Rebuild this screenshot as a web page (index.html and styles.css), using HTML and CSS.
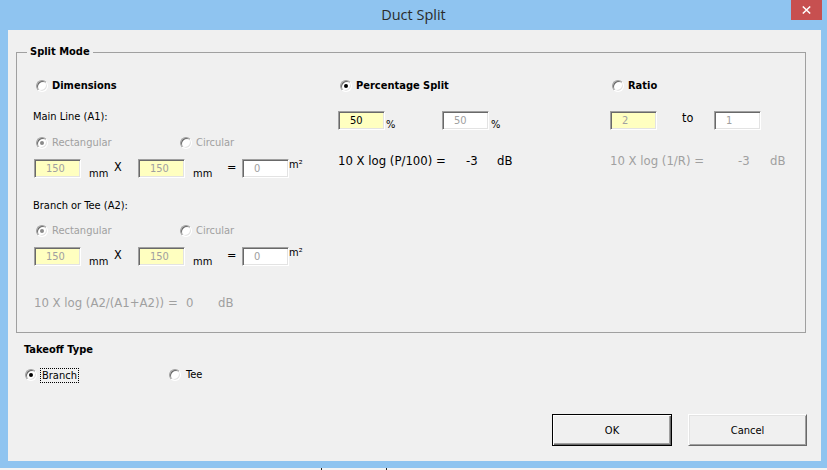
FILE: index.html
```html
<!DOCTYPE html>
<html lang="en">
<head>
<meta charset="utf-8">
<title>Duct Split</title>
<link rel="stylesheet" href="styles.css">
</head>
<body>
<div class="window">
  <header class="titlebar">
    <span></span>
    <h1 class="title">Duct Split</h1>
    <button class="close" aria-label="Close"><svg width="9" height="8" viewBox="0 0 9 8"><path d="M0.8 0.5 L8.2 7.5 M8.2 0.5 L0.8 7.5" stroke="#fff" stroke-width="1.5" fill="none"/></svg></button>
  </header>
  <main class="client">
    <fieldset class="group">
      <legend>Split Mode</legend>
      <div class="cols">
        <section class="col col-dim">
          <div class="opt-row"><span class="radio"></span><span class="bold">Dimensions</span></div>
          <div class="lbl lbl-main">Main Line (A1):</div>
          <div class="shape-row">
            <span class="opt dis"><span class="radio on dis"></span>Rectangular</span>
            <span class="opt dis"><span class="radio dis"></span>Circular</span>
          </div>
          <div class="dim-row">
            <span class="box yellow dis">150</span>
            <span class="mm mm1">mm</span>
            <span class="times">X</span>
            <span class="box yellow dis">150</span>
            <span class="mm mm2">mm</span>
            <span class="eq">=</span>
            <span class="box dis">0</span>
            <span class="sq">m²</span>
          </div>
          <div class="lbl lbl-branch">Branch or Tee (A2):</div>
          <div class="shape-row shape-row-2">
            <span class="opt dis"><span class="radio on dis"></span>Rectangular</span>
            <span class="opt dis"><span class="radio dis"></span>Circular</span>
          </div>
          <div class="dim-row">
            <span class="box yellow dis">150</span>
            <span class="mm mm1">mm</span>
            <span class="times">X</span>
            <span class="box yellow dis">150</span>
            <span class="mm mm2">mm</span>
            <span class="eq">=</span>
            <span class="box dis">0</span>
            <span class="sq">m²</span>
          </div>
          <div class="formula formula-dim dis"><span class="fd1">10 X log (A2/(A1+A2)) =</span><span class="fd2">0</span><span>dB</span></div>
        </section>
        <section class="col col-pct">
          <div class="opt-row"><span class="radio on"></span><span class="bold">Percentage Split</span></div>
          <div class="in-row">
            <span class="box yellow">50</span>
            <span class="pct pct1">%</span>
            <span class="box dis">50</span>
            <span class="pct pct2">%</span>
          </div>
          <div class="formula"><span class="f1">10 X log (P/100) =</span><span class="f2">-3</span><span>dB</span></div>
        </section>
        <section class="col col-ratio">
          <div class="opt-row"><span class="radio"></span><span class="bold">Ratio</span></div>
          <div class="in-row">
            <span class="box yellow dis">2</span>
            <span class="to">to</span>
            <span class="box dis">1</span>
          </div>
          <div class="formula dis"><span class="f1">10 X log (1/R) =</span><span class="f2 f2r">-3</span><span>dB</span></div>
        </section>
      </div>
    </fieldset>
    <div class="takeoff-title bold">Takeoff Type</div>
    <div class="takeoff-row">
      <span class="opt opt-branch"><span class="radio on"></span><span class="focus">Branch</span></span>
      <span class="opt opt-tee"><span class="radio"></span>Tee</span>
    </div>
    <div class="actions">
      <button class="btn btn-default">OK</button>
      <button class="btn">Cancel</button>
    </div>
  </main>
</div>
<div class="strip"><span class="tick"></span><span class="tick tick2"></span></div>
</body>
</html>
```

FILE: styles.css
```css
html, body {
  margin: 0;
  padding: 0;
}
body {
  width: 827px;
  height: 470px;
  overflow: hidden;
  background: #8fc4f0;
  font-family: "DejaVu Sans Condensed", "DejaVu Sans", sans-serif;
  font-stretch: condensed;
  font-size: 11px;
  color: #000;
}
.window {
  height: 468px;
  display: flex;
  flex-direction: column;
  background: #8fc4f0;
}
.titlebar {
  height: 30px;
  flex: none;
  display: grid;
  grid-template-columns: 1fr auto 1fr;
}
.title {
  margin: 0;
  font-family: "Open Sans", "Noto Sans", sans-serif;
  font-stretch: normal;
  font-weight: normal;
  font-size: 14.5px;
  line-height: 30px;
  color: #2b2b2b;
}
.close {
  justify-self: end;
  align-self: start;
  margin: 0 5px 0 0;
  width: 31px;
  height: 20px;
  padding: 0;
  border: 0;
  background: #c75050;
  display: flex;
  align-items: center;
  justify-content: center;
}
.client {
  height: 431px;
  margin: 0 6px 0 8px;
  box-sizing: border-box;
  background: #f0f0f0;
  padding: 15px 14px 0 8px;
  display: flex;
  flex-direction: column;
}
.group {
  margin: 0;
  padding: 0 0 22px 0;
  width: 790px;
  box-sizing: border-box;
  border: 1px solid #a0a0a0;
  min-width: 0;
}
.group legend {
  margin-left: 10px;
  padding: 0 3px;
  font-weight: bold;
  line-height: 14px;
}
.bold { font-weight: bold; }
.dis { color: #a0a0a0; }
.cols {
  display: grid;
  grid-template-columns: 305px 272px 1fr;
  padding: 20px 0 0 16px;
}
.col { display: flex; flex-direction: column; }

.radio {
  width: 12px;
  height: 12px;
  box-sizing: border-box;
  border-radius: 50%;
  border: 1px solid;
  border-color: #a0a0a0 #fff #fff #a0a0a0;
  background: #fff;
  box-shadow: inset 1px 1px 0 #696969, inset -1px -1px 0 #e3e3e3;
  display: flex;
  align-items: center;
  justify-content: center;
  flex: none;
  margin-right: 4px;
}
.radio.on::after {
  content: "";
  width: 4px;
  height: 4px;
  border-radius: 50%;
  background: #000;
}
.radio.dis.on::after { background: #8a8a8a; }

.opt-row {
  height: 14px;
  display: flex;
  align-items: center;
  line-height: 14px;
}
.opt-row .radio { margin-left: 2px; }
.col-dim .opt-row .radio { margin-left: 3px; }

.lbl { height: 14px; line-height: 14px; }
.lbl-main { margin-top: 17px; }
.lbl-branch { margin-top: 21px; }

.shape-row {
  height: 14px;
  margin-top: 12px;
  display: grid;
  grid-template-columns: 147px auto;
  line-height: 14px;
}
.shape-row-2 { margin-top: 11px; }
.opt { display: flex; align-items: center; }
.shape-row .opt:first-child .radio { margin-left: 3px; }

.dim-row {
  height: 19px;
  margin-top: 9px;
  display: flex;
  align-items: flex-start;
}
.box {
  width: 47px;
  height: 19px;
  box-sizing: border-box;
  flex: none;
  border: 1px solid;
  border-color: #a0a0a0 #fff #fff #a0a0a0;
  box-shadow: inset 1px 1px 0 #696969, inset -1px -1px 0 #e3e3e3;
  background: #fff;
  padding-left: 11px;
  line-height: 17px;
}
.yellow { background: #ffffc0; }
.dim-row .box:first-child { margin-left: 1px; }
.mm { line-height: 14px; padding-top: 8px; flex: none; }
.mm1 { margin-left: 8px; width: 25px; }
.mm2 { margin-left: 8px; width: 34px; }
.times, .eq {
  font-size: 12.5px;
  line-height: 14px;
  padding-top: 1px;
  flex: none;
}
.times { width: 24px; }
.eq { width: 15px; }
.sq { line-height: 12px; }

.in-row {
  height: 19px;
  margin-top: 18px;
  display: flex;
  align-items: flex-start;
}
.pct { line-height: 14px; padding-top: 7px; flex: none; }
.pct1 { margin-left: 1px; width: 56px; }
.pct2 { margin-left: 2px; }
.to {
  font-size: 12.5px;
  line-height: 14px;
  margin-left: 25px;
  width: 32px;
  flex: none;
}

.formula {
  display: flex;
  font-size: 13px;
  line-height: 15px;
  margin-top: 23px;
  white-space: nowrap;
}
.f1 { width: 128px; flex: none; }
.f2 { width: 31px; flex: none; }
.f2r { width: 32px; }
.formula-dim { margin-top: 29px; }
.fd1 { width: 152px; margin-left: 1px; flex: none; }
.fd2 { width: 32px; flex: none; }

.takeoff-title {
  margin: 10px 0 0 8px;
  line-height: 14px;
}
.takeoff-row {
  height: 16px;
  margin-top: 10px;
  display: grid;
  grid-template-columns: 153px auto;
  line-height: 14px;
}
.opt-branch .radio { margin-left: 9px; margin-right: 3px; }
.opt-tee .radio { margin-right: 5px; }
.focus {
  border: 1px dotted #000;
  padding: 0 1px;
  line-height: 13px;
}

.actions {
  margin-top: auto;
  margin-bottom: 15px;
  display: flex;
  justify-content: flex-end;
  gap: 16px;
}
.btn {
  width: 119px;
  height: 32px;
  box-sizing: border-box;
  font: inherit;
  color: #000;
  background: #f0f0f0;
  border: 1px solid;
  border-color: #fff #696969 #696969 #fff;
  box-shadow: inset 1px 1px 0 #e3e3e3, inset -1px -1px 0 #a0a0a0;
  padding: 0;
}
.btn-default {
  width: 120px;
  border: 1px solid #000;
  box-shadow: inset 1px 1px 0 #fff, inset -1px -1px 0 #696969, inset -2px -2px 0 #a0a0a0;
}

.strip {
  height: 2px;
  background: #f4f4f4;
  display: flex;
  padding-left: 321px;
}
.tick { width: 1px; height: 2px; background: #222; }
.tick2 { margin-left: 64px; }
```
